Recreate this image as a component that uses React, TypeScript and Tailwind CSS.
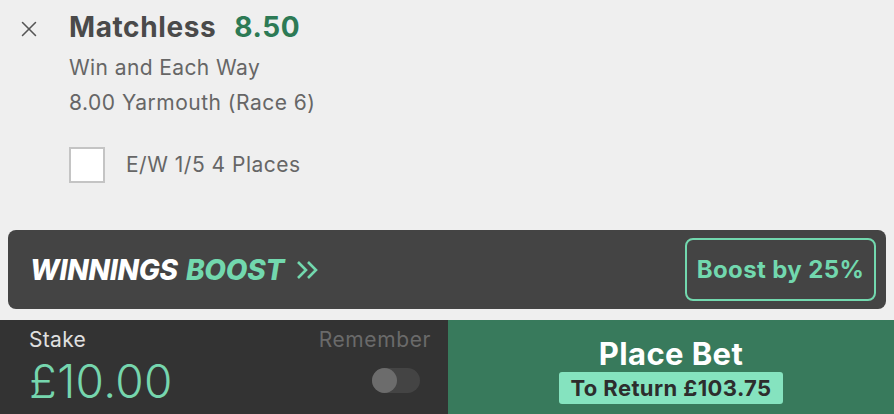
import { X } from 'lucide-react';

const BetSlip = () => {
  return (
    <div className="w-[894px] h-[414px] bg-[#efefef] flex flex-col overflow-hidden font-['Inter',sans-serif]">
      {/* selection */}
      <div className="h-[230px] flex pl-[16px] pt-[11px]">
        <X size={26} strokeWidth={1.4} className="text-[#555] mt-[5px]" />
        <div className="ml-[27px] flex flex-col">
          <div className="flex items-baseline gap-[18px] text-[28px] leading-[32px] font-bold tracking-[0.6px]">
            <span className="text-[#4a4a4a]">Matchless</span>
            <span className="text-[#2d7a55]">8.50</span>
          </div>
          <div className="mt-[7px] text-[21px] leading-[35px] tracking-[0.4px] text-[#666]">Win and Each Way</div>
          <div className="text-[21px] leading-[35px] tracking-[0.5px] text-[#666]">8.00 Yarmouth (Race 6)</div>
          <div className="mt-[27px] flex items-center gap-[21px]">
            <div className="w-[36px] h-[36px] bg-white border-2 border-[#c4c4c4]" />
            <span className="text-[21px] tracking-[0.5px] text-[#666]">E/W 1/5 4 Places</span>
          </div>
        </div>
      </div>

      {/* winnings boost */}
      <div className="mx-2 h-[79px] rounded-lg bg-[#444444] flex items-center justify-between pl-[22px] pr-[10px]">
        <div className="flex items-center gap-[8px] text-[28px] font-extrabold italic tracking-[-0.2px]">
          <span className="text-white">WINNINGS</span>
          <span className="text-[#72d8ae]">BOOST</span>
          <svg width="26" height="22" viewBox="0 0 26 22" fill="none" stroke="#72d8ae" strokeWidth="2.6" className="ml-[3px]">
            <path d="M3 3l8 8-8 8M13 3l8 8-8 8" />
          </svg>
        </div>
        <div className="w-[191px] h-[63px] rounded-lg border-2 border-[#72d8ae] flex items-center justify-center text-[24px] font-bold tracking-[0.4px] text-[#72d8ae]">
          Boost by 25%
        </div>
      </div>

      {/* stake + place bet */}
      <div className="mt-[11px] flex-1 grid grid-cols-[448px_1fr]">
        <div className="bg-[#333333] flex justify-between pl-[29px] pr-[17px] pt-[9px]">
          <div className="flex flex-col">
            <span className="text-[21px] leading-[22px] tracking-[0.3px] text-[#e0e0e0]">Stake</span>
            <span className="mt-[6px] text-[46px] leading-[48px] font-light tracking-[0.3px] text-[#76d6ae]">£10.00</span>
          </div>
          <div className="flex flex-col items-end">
            <span className="text-[21px] leading-[22px] tracking-[0.6px] text-[#6a6a6a]">Remember</span>
            <div className="mt-[17px] mr-[11px] w-[48px] h-[25px] rounded-full bg-[#444] flex items-center">
              <div className="w-[25px] h-[25px] rounded-full bg-[#6c6c6c]" />
            </div>
          </div>
        </div>
        <div className="bg-[#387a5c] flex flex-col items-center pt-[17px]">
          <span className="text-[31px] leading-[34px] font-bold tracking-[0.4px] text-white">Place Bet</span>
          <span className="mt-[1px] px-[11px] h-[32px] rounded-[3px] bg-[#85e3bf] flex items-center text-[22px] font-bold tracking-[0.4px] text-[#2d2d2d]">
            To Return £103.75
          </span>
        </div>
      </div>
    </div>
  );
};

export default function App() {
  return <BetSlip />;
}
